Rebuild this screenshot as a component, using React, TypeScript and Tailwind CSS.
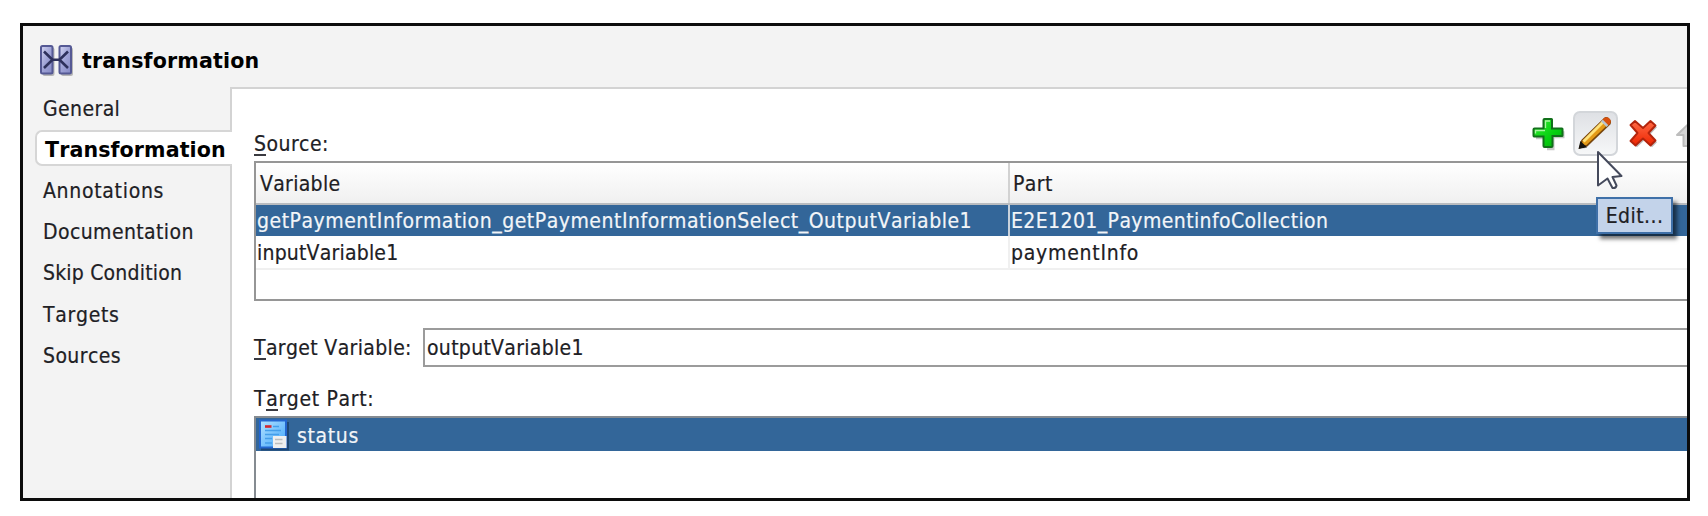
import type { ReactNode } from 'react';

function Mnemonic({ children }: { children: ReactNode }) {
  return <span className="border-b-2 border-[#3a3a40] inline-block leading-[20px]">{children}</span>;
}

function TransformIcon() {
  return (
    <svg width="36" height="34" viewBox="0 0 36 34">
      <defs>
        <linearGradient id="slab" x1="0" y1="0" x2="1" y2="1">
          <stop offset="0" stopColor="#d4d6f2" />
          <stop offset="0.5" stopColor="#9fa3d6" />
          <stop offset="1" stopColor="#8488c4" />
        </linearGradient>
      </defs>
      <rect x="3.5" y="3.5" width="12" height="28.5" rx="2" fill="#00000040" />
      <rect x="22" y="3.5" width="12" height="28.5" rx="2" fill="#00000040" />
      <rect x="2" y="2" width="11.5" height="27.5" rx="1.5" fill="url(#slab)" stroke="#555994" strokeWidth="2" />
      <rect x="20.5" y="2" width="11.5" height="27.5" rx="1.5" fill="url(#slab)" stroke="#555994" strokeWidth="2" />
      <path d="M5 7.5 L13.5 15.8 L5 24 M29 7.5 L20.5 15.8 L29 24 M12 15.8 H22" fill="none" stroke="#2e315c" strokeWidth="2.6" />
    </svg>
  );
}

function PlusIcon() {
  return (
    <svg width="34" height="34" viewBox="0 0 34 34">
      <defs>
        <linearGradient id="plus" x1="0" y1="0" x2="1" y2="1">
          <stop offset="0" stopColor="#35ee35" />
          <stop offset="0.6" stopColor="#06cf10" />
          <stop offset="1" stopColor="#04a80c" />
        </linearGradient>
      </defs>
      <path d="M14 3.5 H20 V13 H31.5 V20 H21.5 V32 H14 V21 H3 V14 H14Z" transform="translate(1 1.2)" fill="#00000038" />
      <path d="M12.5 2 H19.5 Q20 2 20 2.5 V11.5 H30 Q30.5 11.5 30.5 12 V18.5 Q30.5 19 30 19 H20.5 V29 Q20.5 30 19.5 30 H12.5 Q11.5 30 11.5 29 V19.5 H2 Q1.5 19.5 1.5 18.5 V12.5 Q1.5 11.5 2.5 11.5 H11.5 V3 Q11.5 2 12.5 2Z" fill="url(#plus)" stroke="#11701a" strokeWidth="2" />
      <path d="M13.5 11 V4 H18 M3.5 16.5 V13.5 H13" fill="none" stroke="#a9f7a0" strokeWidth="1.3" />
    </svg>
  );
}

function PencilIcon() {
  return (
    <svg width="36" height="36" viewBox="0 0 36 36">
      <path d="M5 33 L9 31 L33 8 L30 5Z" fill="#00000040" />
      <path d="M2 31.5 L4 24.5 L26.5 2.5 Q28 1 30 2.5 L31.5 4 Q33 6 31.5 8 L9 29.5Z" fill="#e39a18" stroke="#7a4508" strokeWidth="1.6" />
      <path d="M5.5 25.5 L25 6" stroke="#ffe27a" strokeWidth="3" />
      <path d="M24 4.5 L29.5 10" stroke="#b9c3d0" strokeWidth="2.6" />
      <path d="M26.5 3.5 Q28.5 1.5 30.5 3.5 Q32.5 5.5 30.5 7.5Z" fill="#ef5a10" stroke="#d7500f" strokeWidth="2.5" />
      <path d="M1.5 32 L2.8 26.5 L7.5 30.8Z" fill="#16130f" stroke="#16130f" strokeWidth="1.5" />
    </svg>
  );
}

function DeleteIcon() {
  return (
    <svg width="30" height="30" viewBox="0 0 30 30">
      <defs>
        <linearGradient id="cross" x1="0" y1="0" x2="0" y2="1">
          <stop offset="0" stopColor="#ff6a45" />
          <stop offset="1" stopColor="#ee2400" />
        </linearGradient>
      </defs>
      <path d="M6 2 L14 9 L21.5 2 L26.5 6.5 L19.5 14 L26.5 21.5 L21.5 26.5 L14 19.5 L6.5 26.5 L1.5 22 L8.5 14 L1.5 6Z" transform="translate(1.5 1.7)" fill="#00000040" />
      <path d="M6 2 L14 9 L21.5 2 L26.5 6.5 L19.5 14 L26.5 21.5 L21.5 26.5 L14 19.5 L6.5 26.5 L1.5 22 L8.5 14 L1.5 6Z" fill="url(#cross)" stroke="#b3240c" strokeWidth="1.9" strokeLinejoin="round" />
    </svg>
  );
}

function UpIcon() {
  return (
    <svg width="30" height="28" viewBox="0 0 30 28">
      <path d="M14 1.5 L27 14 H20.5 V25 H7.5 V14 H1Z" fill="#d6d6d6" stroke="#bdbdbd" strokeWidth="2" strokeLinejoin="round" />
    </svg>
  );
}

function PartIcon() {
  return (
    <svg width="32" height="32" viewBox="0 0 32 32">
      <defs>
        <linearGradient id="doc" x1="0" y1="0" x2="1" y2="1">
          <stop offset="0" stopColor="#b5e3ff" />
          <stop offset="1" stopColor="#3ea4fb" />
        </linearGradient>
      </defs>
      <rect x="3" y="3" width="28" height="28.5" fill="#173b63" opacity="0.7" />
      <rect x="2" y="1.5" width="26" height="27" fill="url(#doc)" stroke="#2366cf" strokeWidth="2" />
      <path d="M15 7.5 H21 M7 11.5 H23 M7 15.5 H21 M7 19.5 H14 M7 24 H14" stroke="#459eea" strokeWidth="1.7" />
      <path d="M7 7.5 H13.5" stroke="#d3262f" strokeWidth="2.6" />
      <rect x="15" y="17" width="13.5" height="12" fill="#efefef" />
      <path d="M17 20.5 H24.5 M17 24.5 H24.5" stroke="#bdbdbd" strokeWidth="1.5" />
    </svg>
  );
}

function Cursor() {
  return (
    <svg width="28" height="42" viewBox="0 0 28 42">
      <path d="M2 2 L25.5 26 L16.5 27 L20.5 35.5 Q20 38.5 16.5 38 L11.5 28.5 L2 35.5Z" fill="#fff" stroke="#454a5c" strokeWidth="2" strokeLinejoin="round" />
    </svg>
  );
}

const tabs = ['General', 'Transformation', 'Annotations', 'Documentation', 'Skip Condition', 'Targets', 'Sources'];

export default function App() {
  return (
    <div className="h-[516px] w-[1708px] overflow-hidden bg-white pl-[20px] pt-[23px] font-['DejaVu_Sans_Condensed','DejaVu_Sans',sans-serif] text-[21px] leading-[24px] tracking-[0.45px] text-[#202024] [-webkit-text-stroke:0.2px] [font-kerning:none] [font-stretch:condensed]">
      <div className="relative flex h-[478px] w-[1670px] flex-col overflow-hidden whitespace-nowrap border-[3px] border-[#0c0c0c] bg-[#f3f3f3]">
        <header className="flex h-[61px] shrink-0 items-center pl-[16px] pt-[9px]">
          <TransformIcon />
          <h1 className="ml-[7px] font-['DejaVu_Sans',sans-serif] text-[20.6px] font-bold tracking-[0.15px] text-black [-webkit-text-stroke:0] [font-stretch:normal]">transformation</h1>
        </header>
        <div className="flex min-h-0 flex-1">
          <nav className="relative z-10 flex w-[209px] shrink-0 flex-col">
            {tabs.map((tab) =>
              tab === 'Transformation' ? (
                <div key={tab} className="flex h-[41.2px] items-center pl-[12px]">
                  <div className="mb-[2px] flex h-[36px] w-[197px] items-center rounded-l-[7px] border-2 border-r-0 border-[#d6d6d6] bg-white pl-[8px] pt-[4px] font-['DejaVu_Sans',sans-serif] text-[20.6px] font-bold tracking-[0.1px] text-black [-webkit-text-stroke:0] [font-stretch:normal]">
                    {tab}
                  </div>
                </div>
              ) : (
                <div key={tab} className="flex h-[41.2px] items-center pl-[20px] pt-[2px]">
                  <span className={tab === 'Annotations' || tab === 'Targets' ? 'tracking-[0.7px]' : tab === 'Skip Condition' ? 'tracking-[0.2px]' : 'tracking-[0.4px]'}>{tab}</span>
                </div>
              ),
            )}
          </nav>
          <main className="-ml-[2px] flex min-w-0 flex-1 flex-col border-l-2 border-t-2 border-[#d3d3d3] bg-white pl-[22px]">
            <div className="flex h-[72px] shrink-0 items-start">
              <label className="mt-[43px] flex-1"><Mnemonic>S</Mnemonic>ource:</label>
              <div className="flex w-[155px] shrink-0 items-start pt-[22px]">
                <div className="mt-[6px] w-[41px] shrink-0"><PlusIcon /></div>
                <button className="flex h-[45px] w-[45px] shrink-0 items-center justify-center rounded-[7px] border-2 border-[#d3d6da] bg-linear-to-b from-[#dfe1e5] to-[#f6f7f8]"><PencilIcon /></button>
                <div className="ml-[11px] mt-[8px] w-[30px] shrink-0"><DeleteIcon /></div>
                <div className="ml-[17px] mt-[10px] w-[30px] shrink-0"><UpIcon /></div>
              </div>
            </div>
            <section className="flex h-[140px] shrink-0 flex-col border-y-2 border-l-2 border-[#969696]">
              <div className="flex h-[42px] shrink-0 border-b-2 border-[#b9bcc0] bg-linear-to-b from-white to-[#f0f0f0]">
                <div className="flex w-[754px] items-center border-r-2 border-[#d2d2d2] pl-[4px] pt-[2px] tracking-[0.3px]">Variable</div>
                <div className="flex items-center pl-[3px] pt-[2px]">Part</div>
              </div>
              <div className="flex h-[31px] shrink-0 bg-[#336699] text-[#f2f5f8]">
                <div className="flex w-[754px] items-center border-r-2 border-[#c9d2dc] pl-[1px] tracking-[0.52px]">getPaymentInformation_getPaymentInformationSelect_OutputVariable1</div>
                <div className="flex items-center pl-px tracking-[0.4px]">E2E1201_PaymentinfoCollection</div>
              </div>
              <div className="flex h-[34px] shrink-0 border-b-2 border-[#f0f0f0]">
                <div className="flex w-[754px] items-center border-r-2 border-[#f0f0f0] pl-px pt-px tracking-[0.2px]">inputVariable1</div>
                <div className="flex items-center pl-px pt-px tracking-[0.75px]">paymentInfo</div>
              </div>
            </section>
            <div className="mt-[27px] flex h-[39px] shrink-0 items-center">
              <label className="w-[169px] shrink-0 tracking-[0.35px]"><Mnemonic>T</Mnemonic>arget Variable:</label>
              <div className="flex h-full flex-1 items-center border-y-2 border-l-2 border-[#9b9b9b] pl-[2px] tracking-[0.3px]">outputVariable1</div>
            </div>
            <label className="mt-[20px] h-[29px] shrink-0 tracking-[0.65px]">T<Mnemonic>a</Mnemonic>rget Part:</label>
            <section className="flex min-h-0 flex-1 flex-col border-l-2 border-t-2 border-[#858b91]">
              <div className="flex h-[33px] shrink-0 items-center bg-[#336699] pl-[2px] text-[#f2f5f8]">
                <PartIcon />
                <span className="ml-[7px] pt-[2px] tracking-[0.65px]">status</span>
              </div>
            </section>
          </main>
        </div>
        <div className="absolute left-[1573px] top-[171px] z-20 flex h-[37px] w-[77px] items-center justify-center border-2 border-[#3f70a8] bg-[#c3d3ea] pt-px text-[#202024] shadow-[4px_5px_4px_rgba(0,0,0,0.55)]">Edit...</div>
        <div className="absolute left-[1573px] top-[124px] z-30"><Cursor /></div>
      </div>
    </div>
  );
}
